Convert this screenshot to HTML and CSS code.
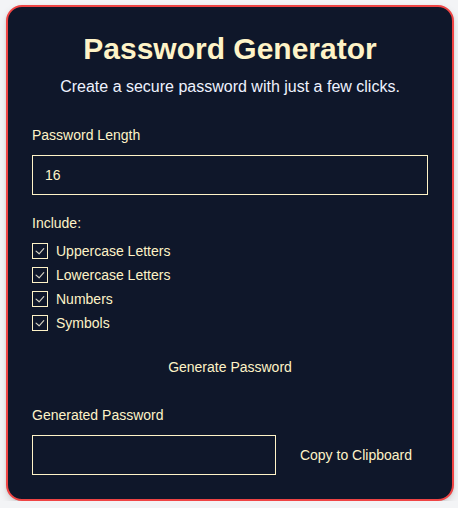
FILE: index.html
```html
<!DOCTYPE html>
<html lang="en">
<head>
<meta charset="utf-8">
<title>Password Generator</title>
<link rel="stylesheet" href="styles.css">
</head>
<body>
<main class="card">
  <h1 class="title">Password Generator</h1>
  <p class="subtitle">Create a secure password with just a few clicks.</p>

  <label class="field-label" for="length">Password Length</label>
  <input class="text-input" id="length" type="text" value="16">

  <div class="include-label">Include:</div>
  <ul class="options">
    <li class="option"><span class="box"><svg viewBox="0 0 16 16" width="16" height="16"><path d="M3.5 8.2 L7 11.2 L12.3 5.3" fill="none" stroke="#d6d3c4" stroke-width="1.3" stroke-linecap="round" stroke-linejoin="round"/></svg></span>Uppercase Letters</li>
    <li class="option"><span class="box"><svg viewBox="0 0 16 16" width="16" height="16"><path d="M3.5 8.2 L7 11.2 L12.3 5.3" fill="none" stroke="#d6d3c4" stroke-width="1.3" stroke-linecap="round" stroke-linejoin="round"/></svg></span>Lowercase Letters</li>
    <li class="option"><span class="box"><svg viewBox="0 0 16 16" width="16" height="16"><path d="M3.5 8.2 L7 11.2 L12.3 5.3" fill="none" stroke="#d6d3c4" stroke-width="1.3" stroke-linecap="round" stroke-linejoin="round"/></svg></span>Numbers</li>
    <li class="option"><span class="box"><svg viewBox="0 0 16 16" width="16" height="16"><path d="M3.5 8.2 L7 11.2 L12.3 5.3" fill="none" stroke="#d6d3c4" stroke-width="1.3" stroke-linecap="round" stroke-linejoin="round"/></svg></span>Symbols</li>
  </ul>

  <div class="generate-row">
    <button class="btn" type="button">Generate Password</button>
  </div>

  <label class="field-label result-label" for="result">Generated Password</label>
  <div class="result-row">
    <input class="text-input result-input" id="result" type="text" value="">
    <button class="btn copy-btn" type="button">Copy to Clipboard</button>
  </div>
</main>
</body>
</html>
```
FILE: styles.css
```css
* { box-sizing: border-box; }

html, body {
  margin: 0;
  padding: 0;
}

body {
  background: #f3f4f6;
  font-family: "Liberation Sans", Arial, sans-serif;
  padding: 5px 0 0 6px;
}

.card {
  width: 448px;
  background: #0f172a;
  border: 2px solid #ef4444;
  border-radius: 16px;
  padding: 24px;
  box-shadow: 0 4px 8px rgba(0, 0, 0, 0.12), 0 1px 3px rgba(0, 0, 0, 0.08);
  display: flex;
  flex-direction: column;
}

.title {
  margin: 0;
  font-size: 30px;
  line-height: 36px;
  font-weight: 700;
  color: #fef3c7;
  text-align: center;
}

.subtitle {
  margin: 8px 0 0;
  font-size: 16px;
  line-height: 24px;
  color: #eef2ff;
  text-align: center;
}

.field-label {
  display: block;
  margin-top: 26px;
  font-size: 14px;
  line-height: 20px;
  color: #fef3c7;
}

.text-input {
  display: block;
  margin-top: 10px;
  width: 100%;
  height: 40px;
  padding: 0 12px;
  background: transparent;
  border: 1px solid #fef3c7;
  border-radius: 0;
  color: #fef3c7;
  font-family: "Liberation Sans", Arial, sans-serif;
  font-size: 14px;
  outline: none;
}

.include-label {
  margin-top: 18px;
  font-size: 14px;
  line-height: 20px;
  color: #fef3c7;
}

.options {
  list-style: none;
  margin: 6px 0 0;
  padding: 0;
}

.option {
  display: flex;
  align-items: center;
  gap: 8px;
  height: 24px;
  font-size: 14px;
  color: #fef3c7;
}

.box {
  width: 16px;
  height: 16px;
  border: 1px solid #fef3c7;
  display: flex;
  align-items: center;
  justify-content: center;
  flex: none;
}

.box svg {
  display: block;
  width: 14px;
  height: 14px;
}

.generate-row {
  display: flex;
  justify-content: center;
  margin-top: 12px;
}

.btn {
  background: transparent;
  border: none;
  color: #fef3c7;
  font-family: "Liberation Sans", Arial, sans-serif;
  font-size: 14px;
  line-height: 20px;
  padding: 10px 16px;
  cursor: pointer;
}

.result-label {
  margin-top: 18px;
}

.result-row {
  display: flex;
  align-items: center;
  gap: 8px;
  margin-top: 10px;
}

.result-input {
  margin-top: 0;
  flex: 1;
  width: auto;
  min-width: 0;
}

.copy-btn {
  flex: none;
}
```
